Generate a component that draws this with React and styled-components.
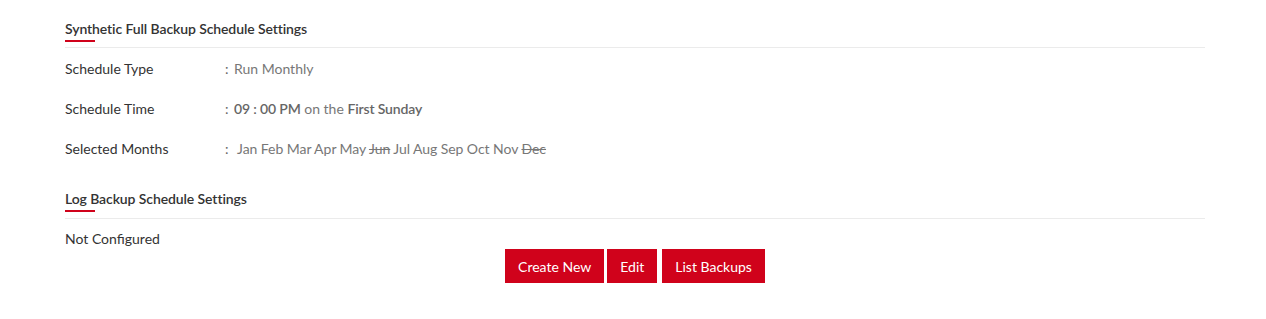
import React from "react";
import styled, { createGlobalStyle } from "styled-components";

const Global = createGlobalStyle`
  html, body { margin: 0; padding: 0; background: #fff; }
  body { font-family: Lato, "Open Sans", Arial, sans-serif; font-size: 14px; color: #333; }
`;

const Page = styled.div`
  padding: 0 61px 0 65px;
`;

const SectionHeader = styled.div`
  padding-top: ${(p) => p.$top}px;
  padding-bottom: ${(p) => p.$bottom}px;
  border-bottom: 1px solid #ebebeb;
`;

const Title = styled.div`
  font-weight: 600;
  font-size: 14px;
  line-height: 20px;
  letter-spacing: -0.1px;
  color: #333;
`;

const Underline = styled.div`
  width: 30px;
  height: 2px;
  margin-top: 1px;
  background: #d0021b;
`;

const Rows = styled.div`
  margin-top: 1px;
`;

const Row = styled.div`
  display: flex;
  align-items: center;
  height: 40px;
  line-height: 20px;
`;

const Label = styled.div`
  width: 160px;
  flex: none;
  color: #333;
`;

const Colon = styled.span`
  color: #666;
  width: 9px;
  flex: none;
`;

const Value = styled.div`
  color: #777;
  padding-left: ${(p) => (p.$extra ? 3 : 0)}px;
  word-spacing: ${(p) => (p.$extra ? -0.25 : 0)}px;
`;

const Strong = styled.b`
  font-weight: 600;
  letter-spacing: -0.15px;
  color: #666;
`;

const Month = styled.span`
  text-decoration: ${(p) => (p.$off ? "line-through" : "none")};
`;

const Plain = styled.div`
  margin-top: 10px;
  line-height: 20px;
  color: #333;
`;

const Actions = styled.div`
  display: flex;
  justify-content: center;
`;

const Button = styled.button`
  height: 34px;
  padding: 0 13px;
  margin-right: ${(p) => p.$gap || 0}px;
  border: none;
  border-radius: 0;
  background: #d0021b;
  color: #fff;
  font-family: Lato, "Open Sans", Arial, sans-serif;
  font-size: 14px;
  cursor: pointer;
`;

const months = ["Jan", "Feb", "Mar", "Apr", "May", "Jun", "Jul", "Aug", "Sep", "Oct", "Nov", "Dec"];
const off = new Set(["Jun", "Dec"]);

export default function App() {
  return (
    <Page>
      <Global />
      <SectionHeader $top={19} $bottom={5}>
        <Title>Synthetic Full Backup Schedule Settings</Title>
        <Underline />
      </SectionHeader>
      <Rows>
        <Row>
          <Label>Schedule Type</Label>
          <Colon>:</Colon>
          <Value>Run Monthly</Value>
        </Row>
        <Row>
          <Label>Schedule Time</Label>
          <Colon>:</Colon>
          <Value>
            <Strong>09 : 00 PM</Strong> on the <Strong>First Sunday</Strong>
          </Value>
        </Row>
        <Row>
          <Label>Selected Months</Label>
          <Colon>:</Colon>
          <Value $extra>
            {months.map((m, i) => (
              <React.Fragment key={m}>
                {i > 0 && " "}
                <Month $off={off.has(m)}>{m}</Month>
              </React.Fragment>
            ))}
          </Value>
        </Row>
      </Rows>
      <SectionHeader $top={20} $bottom={6}>
        <Title>Log Backup Schedule Settings</Title>
        <Underline />
      </SectionHeader>
      <Plain>Not Configured</Plain>
      <Actions>
        <Button $gap={3}>Create New</Button>
        <Button $gap={5}>Edit</Button>
        <Button>List Backups</Button>
      </Actions>
    </Page>
  );
}
